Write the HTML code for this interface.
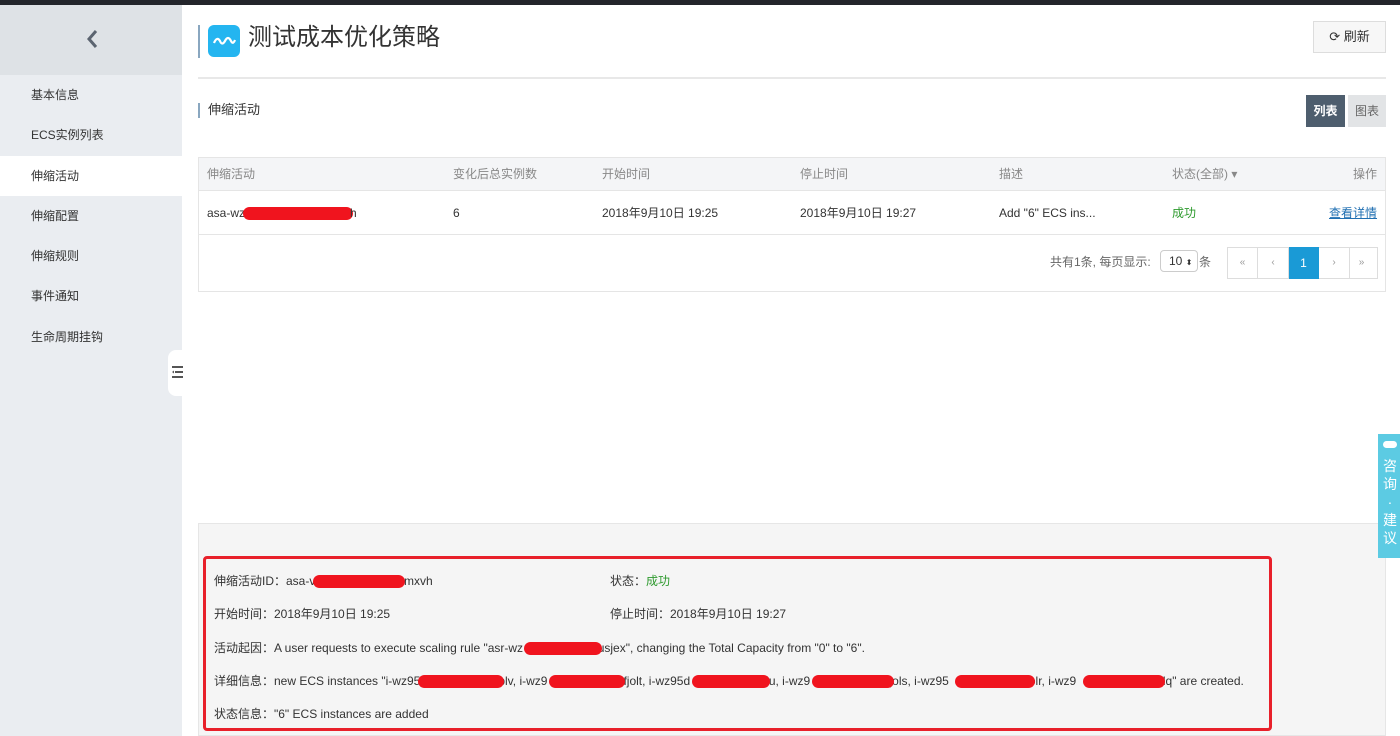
<!DOCTYPE html>
<html><head><meta charset="utf-8"><style>
*{margin:0;padding:0;box-sizing:border-box}
body{width:1400px;height:736px;overflow:hidden;background:#fff;font-family:"Liberation Sans","Noto Sans CJK SC",sans-serif;font-size:12px;line-height:14px;color:#333;position:relative}
.abs{position:absolute}
.red{position:absolute;background:#f0141e;border-radius:8px;height:13px}
.side a{position:absolute;left:31px;font-size:12px;color:#333}
.th{position:absolute;top:167px;color:#888}
.td{position:absolute;top:206px;color:#333}
.pg{position:absolute;top:247px;height:32px;width:31px;border:1px solid #ddd;border-left:none;text-align:center;line-height:30px;color:#999;font-size:10px}
.row{position:absolute;left:214px;font-size:12px;color:#333}
</style></head><body>
<div class="abs" style="left:0;top:0;width:1400px;height:5px;background:#23252b"></div>
<div class="abs" style="left:0;top:5px;width:182px;height:731px;background:#eaedf1"></div>
<div class="abs" style="left:0;top:5px;width:182px;height:70px;background:#dee2e6"></div>
<svg class="abs" style="left:84px;top:28px" width="16" height="22"><path d="M12 3 L5 11 L12 19" stroke="#5b6470" stroke-width="3" fill="none"/></svg>
<div class="abs" style="left:0;top:156px;width:182px;height:40px;background:#fff"></div>
<div class="side">
<a style="top:88px">基本信息</a><a style="top:128px">ECS实例列表</a><a style="top:169px">伸缩活动</a><a style="top:209px">伸缩配置</a><a style="top:249px">伸缩规则</a><a style="top:289px">事件通知</a><a style="top:330px">生命周期挂钩</a>
</div>
<div class="abs" style="left:168px;top:350px;width:16px;height:46px;background:#fff;border-radius:8px 0 0 8px"></div>
<svg class="abs" style="left:171px;top:365px" width="14" height="15"><rect x="1" y="1" width="11" height="2" fill="#555"/><rect x="4" y="6" width="8" height="2" fill="#555"/><path d="M1 7 L3 5.5 L3 8.5Z" fill="#555"/><rect x="1" y="11" width="11" height="2" fill="#555"/></svg>

<div class="abs" style="left:198px;top:25px;width:2px;height:33px;background:#8aa7c0"></div>
<div class="abs" style="left:208px;top:25px;width:32px;height:32px;background:#24b5f0;border-radius:6px"></div>
<svg class="abs" style="left:208px;top:25px" width="32" height="32"><path d="M6 18 Q9 11 12 16 Q14 21 17 16 Q20 10 23 16 Q25 20 27 15" stroke="#fff" stroke-width="2.2" fill="none"/></svg>
<div class="abs" style="left:248px;top:24px;font-size:24px;line-height:28px;color:#333">测试成本优化策略</div>
<div class="abs" style="left:1313px;top:21px;width:73px;height:32px;border:1px solid #ddd;background:#f7f7f7;text-align:center;line-height:30px;font-size:13px">&#x27F3; 刷新</div>
<div class="abs" style="left:198px;top:77px;width:1188px;height:2px;background:#e8e8e8"></div>
<div class="abs" style="left:198px;top:103px;width:2px;height:15px;background:#8aa7c0"></div>
<div class="abs" style="left:208px;top:103px;font-size:13px">伸缩活动</div>
<div class="abs" style="left:1306px;top:95px;width:39px;height:32px;background:#4e5e6e;color:#fff;text-align:center;line-height:32px;font-weight:bold">列表</div>
<div class="abs" style="left:1348px;top:95px;width:38px;height:32px;background:#e2e4e6;color:#666;text-align:center;line-height:32px">图表</div>

<div class="abs" style="left:198px;top:157px;width:1188px;height:135px;border:1px solid #e5e5e5"></div>
<div class="abs" style="left:199px;top:158px;width:1186px;height:33px;background:#f4f5f7;border-bottom:1px solid #e5e5e5"></div>
<div class="abs" style="left:199px;top:234px;width:1186px;height:1px;background:#e5e5e5"></div>
<div class="th" style="left:207px">伸缩活动</div><div class="th" style="left:453px">变化后总实例数</div><div class="th" style="left:602px">开始时间</div><div class="th" style="left:800px">停止时间</div><div class="th" style="left:999px">描述</div><div class="th" style="left:1172px">状态(全部) ▾</div><div class="th" style="left:1353px">操作</div>
<div class="td" style="left:207px">asa-wz</div><div class="red" style="left:243px;top:207px;width:110px"></div><div class="td" style="left:350px">h</div>
<div class="td" style="left:453px">6</div><div class="td" style="left:602px">2018年9月10日 19:25</div><div class="td" style="left:800px">2018年9月10日 19:27</div><div class="td" style="left:999px">Add "6" ECS ins...</div><div class="td" style="left:1172px;color:#2e9a2e">成功</div><div class="td" style="left:1329px;color:#1f6fb2;text-decoration:underline">查看详情</div>
<div class="abs" style="left:1050px;top:255px;color:#666">共有1条, 每页显示:</div>
<div class="abs" style="left:1160px;top:250px;width:38px;height:22px;border:1px solid #ccc;border-radius:4px;line-height:20px;padding-left:8px">10 <span style="font-size:8px">⬍</span></div>
<div class="abs" style="left:1199px;top:255px;color:#666">条</div>
<div class="pg" style="left:1227px;border-left:1px solid #ddd">«</div><div class="pg" style="left:1258px">‹</div><div class="pg" style="left:1289px;background:#1a9ad6;color:#fff;font-size:12px;border-color:#1a9ad6;width:30px">1</div><div class="pg" style="left:1319px">›</div><div class="pg" style="left:1346px;width:32px">»</div>

<div class="abs" style="left:198px;top:523px;width:1188px;height:213px;background:#f5f5f5;border:1px solid #e6e6e6"></div>
<div class="abs" style="left:203px;top:556px;width:1069px;height:175px;border:3px solid #e8202a;border-radius:4px"></div>
<div class="row" style="top:574px">伸缩活动ID：asa-v</div><div class="red" style="left:313px;top:575px;width:92px"></div><div class="row" style="left:404px;top:574px">mxvh</div>
<div class="row" style="left:610px;top:574px">状态：<span style="color:#2e9a2e">成功</span></div>
<div class="row" style="top:607px">开始时间：2018年9月10日 19:25</div>
<div class="row" style="left:610px;top:607px">停止时间：2018年9月10日 19:27</div>
<div class="row" style="top:641px">活动起因：A user requests to execute scaling rule "asr-wz<span style="display:inline-block;width:68px"></span>rjusjex", changing the Total Capacity from "0" to "6".</div>
<div class="red" style="left:524px;top:642px;width:78px"></div>
<div class="row" style="top:674px">详细信息：new ECS instances "i-wz95<span style="display:inline-block;width:78px"></span>plv, i-wz9<span style="display:inline-block;width:76px"></span>fjolt, i-wz95d<span style="display:inline-block;width:76px"></span>lu, i-wz9<span style="display:inline-block;width:76px"></span>fjols, i-wz95<span style="display:inline-block;width:80px"></span>olr, i-wz9<span style="display:inline-block;width:80px"></span>plq" are created.</div>
<div class="red" style="left:418px;top:675px;width:86px"></div><div class="red" style="left:549px;top:675px;width:76px"></div><div class="red" style="left:692px;top:675px;width:78px"></div><div class="red" style="left:812px;top:675px;width:82px"></div><div class="red" style="left:955px;top:675px;width:80px"></div><div class="red" style="left:1083px;top:675px;width:82px"></div>
<div class="row" style="top:707px">状态信息："6" ECS instances are added</div>

<div class="abs" style="left:1378px;top:434px;width:22px;height:124px;background:#5ccbe3"></div>
<div class="abs" style="left:1383px;top:441px;width:14px;height:7px;background:#fff;border-radius:4px"></div>
<div class="abs" style="left:1382px;top:457px;width:16px;color:#fff;font-size:14px;line-height:18px;text-align:center">咨<br>询<br>·<br>建<br>议</div>
</body></html>
